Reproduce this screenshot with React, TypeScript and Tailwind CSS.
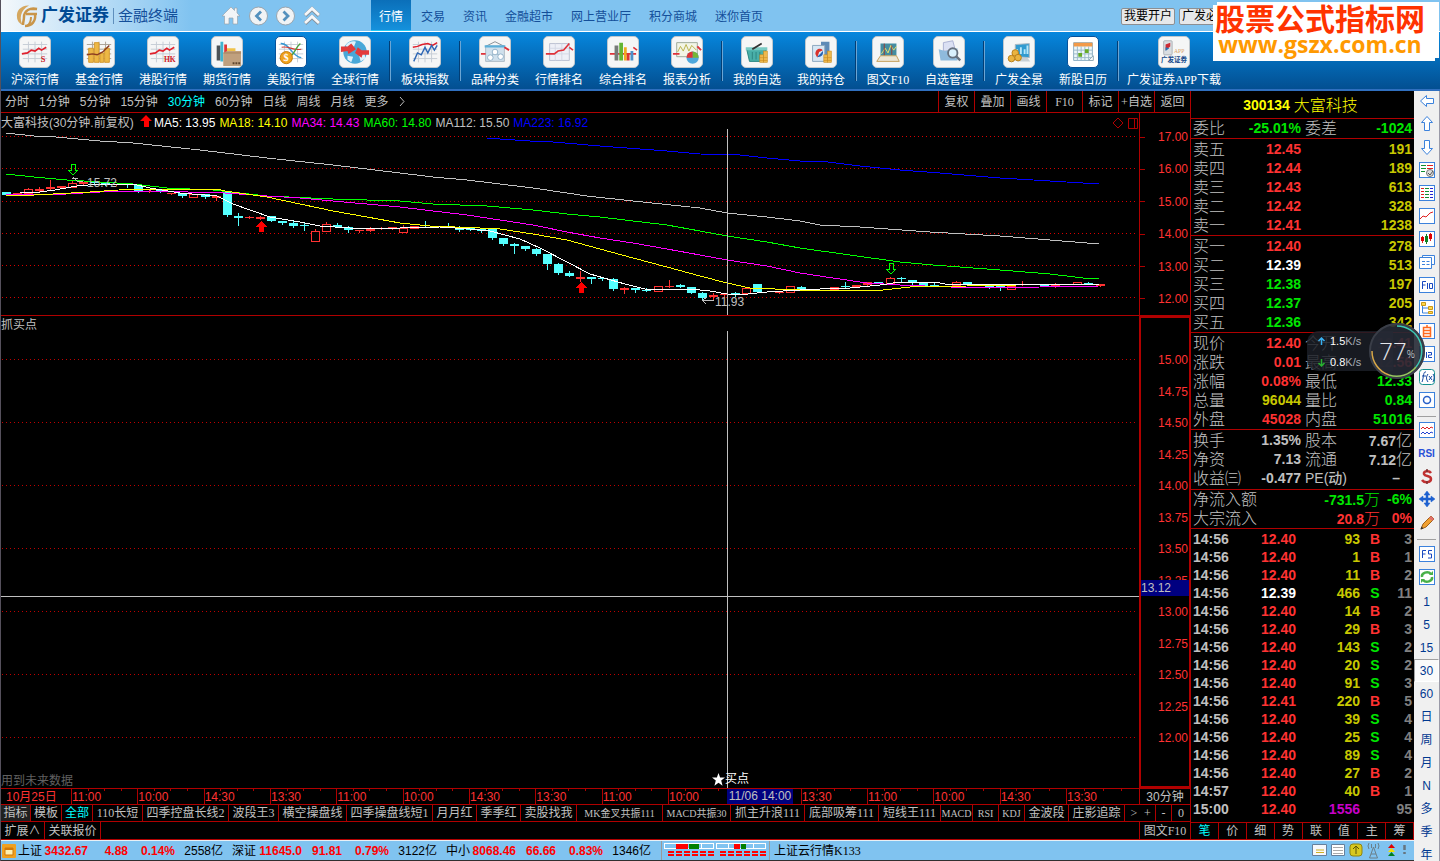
import { Fragment, type ReactNode } from "react";
import clsx from "clsx";

const NAV = ["交易", "资讯", "金融超市", "网上营业厅", "积分商城", "迷你首页"];

const Grid = ({ tone = "#c4ccd4" }: { tone?: string }) => (
  <path d="M3 8H29M3 13H29M3 18H29M3 23H29M9 5V27M16 5V27M23 5V27" stroke={tone} strokeWidth="1" fill="none" />
);

const TrendLine = () => (
  <path d="M2 18L8 17L12 14L16 15L20 12L23 14L28 11" stroke="#e0202c" strokeWidth="1.8" fill="none" />
);

const Coins = ({ x, y }: { x: number; y: number }) => (
  <g fill="#eeb84c" stroke="#c88a1c" strokeWidth=".6">
    <rect x={x} y={y + 4} width="4" height="8" />
    <rect x={x + 4} y={y} width="4" height="12" />
    <path d={`M${x} ${y + 7}h8M${x} ${y + 10}h8`} />
  </g>
);

type Tool = { label: string; icon: ReactNode; bright?: boolean; width?: string };

const TOOL_GROUPS: Tool[][] = [
  [
    {
      label: "沪深行情",
      icon: (
        <>
          <Grid />
          <TrendLine />
          <text x="22" y="27" fontSize="9" fontWeight="bold" fill="#d01824">S</text>
        </>
      ),
    },
    {
      label: "基金行情",
      icon: (
        <>
          <Grid tone="#a79f92" />
          <path d="M5 12h5v15H5zM11 6h5v21h-5zM17 17h4v10h-4zM22 12h5v15h-5z" fill="#edb845" stroke="#d4972b" />
          <path d="M3 19L9 18L14 19L20 16L27 9" stroke="#8b3a20" strokeWidth="1.5" fill="none" />
        </>
      ),
    },
    {
      label: "港股行情",
      icon: (
        <>
          <Grid />
          <TrendLine />
          <text x="17" y="27" fontSize="8" fontWeight="bold" fill="#d01824">HK</text>
        </>
      ),
    },
    {
      label: "期货行情",
      icon: (
        <>
          <path d="M5 9h4v16H5z" fill="#4d5357" />
          <path d="M9 5h3v21H9z" fill="#40b4cf" />
          <path d="M13 8h3v9h-3z" fill="#e03535" />
          <path d="M16 12h9v5h-9z" fill="#efc24a" />
          <path d="M12 17l4-2h15v16H12z" fill="#c0a07e" />
          <path d="M12 17h19" stroke="#a17f5c" />
          <path d="M22 28h8" stroke="#5d442d" strokeWidth="2" strokeDasharray="2 1" />
        </>
      ),
    },
    {
      label: "美股行情",
      bright: true,
      icon: (
        <>
          <Grid />
          <path d="M5 7C14 6 17 21 27 22" stroke="#3598d4" strokeWidth="1.5" fill="none" />
          <path d="M6 11C14 9 17 15 27 13" stroke="#d23b34" strokeWidth="1.2" fill="none" />
          <path d="M26 7C20 12 20 20 11 24" stroke="#4da33c" strokeWidth="1.5" fill="none" />
          <circle cx="11" cy="22" r="6.5" fill="#f0a21c" stroke="#c57a08" />
          <text x="8" y="26" fontSize="11" fontWeight="bold" fill="#fff">$</text>
        </>
      ),
    },
    {
      label: "全球行情",
      icon: (
        <>
          <circle cx="16" cy="16" r="12.5" fill="#49a8d8" />
          <path d="M6 9c3-4 7-5 11-4l-2 5-6 3zM20 18l6-2 1 7-5 3zM8 20l6 1-2 6-4-3z" fill="#dff2fb" />
          <path d="M1 10h7l4-3 5 6-8 5-1-3-7 1zM31 14h-8l-4-3-3 6 7 5 1-3h7z" fill="#e33b3b" />
        </>
      ),
    },
  ],
  [
    {
      label: "板块指数",
      icon: (
        <>
          <Grid />
          <path d="M3 11L8 10L13 8L19 7L24 9L29 6" stroke="#e0202c" strokeWidth="1.6" fill="none" />
          <path d="M4 26L8 17L12 19L16 11L19 17L23 9L26 14L29 9" stroke="#2d67b5" strokeWidth="1.5" fill="none" />
        </>
      ),
    },
  ],
  [
    {
      label: "品种分类",
      icon: (
        <>
          <path d="M16 5L6 10h20z" fill="none" stroke="#858d94" />
          <path d="M6 10h20v16H6z" fill="#cfe0ec" stroke="#adb9c3" />
          <path d="M5 10h22" stroke="#5bafd9" strokeWidth="2.5" />
          <path d="M1 18h5M26 11l5 3" stroke="#df3239" strokeWidth="2" />
          <path d="M11 22L16 16L22 21" stroke="#87a4ba" fill="none" />
          <g fill="#fff" stroke="#8fb0c8"><circle cx="11" cy="22" r="3" /><circle cx="16" cy="16" r="3" /><circle cx="22" cy="21" r="3" /></g>
        </>
      ),
    },
    {
      label: "行情排名",
      icon: (
        <>
          <path d="M6 7h21v18H6z" fill="#eef0f7" stroke="#b9bfd0" />
          <path d="M6 12h21M6 18h21M12 7v18M19 7v18" stroke="#d3d7e4" />
          <path d="M2 18h9l4-3 6-1 6-7M27 11l4 3" stroke="#df3239" strokeWidth="1.7" fill="none" />
        </>
      ),
    },
    {
      label: "综合排名",
      icon: (
        <>
          <path d="M2 18h28M27 11l4 3" stroke="#df3239" strokeWidth="1.7" />
          <path d="M7 9h4v16H7z" fill="#777b78" /><path d="M12 6h4v19h-4z" fill="#63b533" />
          <path d="M17 11h3v14h-3z" fill="#efab21" /><path d="M20 17h3v8h-3z" fill="#d93434" /><path d="M24 15h3v10h-3z" fill="#4b91ca" />
        </>
      ),
    },
    {
      label: "报表分析",
      icon: (
        <>
          <path d="M5 6h22v15H5z" fill="#f3f5e6" stroke="#9ca796" />
          <path d="M6 16l3-6 3 5 3-7 3 7 3-6 5 5" stroke="#b8b047" fill="none" />
          <path d="M1 18h7M27 10l4 4" stroke="#df3239" strokeWidth="2" />
          <circle cx="22" cy="22" r="6.5" fill="#4fa8dc" />
          <path d="M22 22v-6.500a6.500 6.500 0 0 1 6.500 6.500z" fill="#76b638" />
          <path d="M22 22L15.500 22A6.500 6.500 0 0 1 22 15.500z" fill="#df3535" />
        </>
      ),
    },
  ],
  [
    {
      label: "我的自选",
      icon: (
        <>
          <path d="M5 13h21l-3 13H8z" fill="#49afa8" stroke="#25847f" />
          <path d="M4 11h23v3H4z" fill="#79cac3" />
          <path d="M11 13L21 7" stroke="#333" strokeWidth="2" />
          <path d="M11 16v8M15 16v8M19 16v8" stroke="#2c8480" />
          <Coins x={19} y={15} />
        </>
      ),
    },
    {
      label: "我的持仓",
      icon: (
        <>
          <path d="M16 5h9v20h-9z" fill="#5e8bb7" />
          <path d="M7 9h13v17H7z" fill="#d7e7f4" stroke="#89a5bd" />
          <path d="M10 18c0-5 5-7 8-4l-4 2-2 6z" fill="#d9322d" />
          <path d="M18 15c1 5-3 7-6 6l3-3z" fill="#2663b4" />
          <Coins x={19} y={15} />
        </>
      ),
    },
  ],
  [
    {
      label: "图文F10",
      width: "w-[58px]",
      icon: (
        <>
          <path d="M8 7h17v13H8z" fill="#438da1" />
          <path d="M9 18l4-6 3 5 3-8 3 5 3-4" stroke="#e9e46d" fill="none" />
          <path d="M12 7v13M20 9v10" stroke="#963d34" />
          <path d="M8 20h17l3 6H4z" fill="#ece6d5" stroke="#c39d56" />
        </>
      ),
    },
    {
      label: "自选管理",
      icon: (
        <>
          <path d="M10 6l10-2 3 11H10z" fill="#dbe0f3" stroke="#a9afd1" />
          <path d="M5 13l7 2 13-3v13H7z" fill="#8fbadc" />
          <circle cx="20" cy="17" r="5" fill="#d9f0fd" stroke="#66717f" strokeWidth="2" />
          <path d="M24 21l4 4" stroke="#66717f" strokeWidth="2.5" />
        </>
      ),
    },
  ],
  [
    {
      label: "广发全景",
      icon: (
        <>
          <path d="M12 8l15-1v15l-15-1z" fill="#319bd0" stroke="#aeb9c1" />
          <path d="M14 18v-5M18 18v-7M22 18v-5M25 18V9" stroke="#b7e7f9" strokeWidth="2" />
          <path d="M17 22h8l3 4H14z" fill="#c8d0d5" />
          <g fill="#eab440" stroke="#b87e18"><circle cx="12" cy="17" r="3.500" /><circle cx="8" cy="23" r="3.500" /><circle cx="15" cy="22" r="3.500" /></g>
        </>
      ),
    },
    {
      label: "新股日历",
      bright: true,
      icon: (
        <>
          <path d="M6 6h20v19H6z" fill="#edf7fb" stroke="#87abc2" />
          <path d="M6 6h20v4H6z" fill="#f29a49" />
          <path d="M6 14h20M6 18h20M6 22h20M10 10v15M14 10v15M18 10v15M22 10v15" stroke="#9bb8c7" />
          <path d="M18 13h4v4h-4zM11 17h4v4h-4z" fill="#67ac27" />
          <path d="M22 25l5-5v5z" fill="#fff" stroke="#8da5b2" />
        </>
      ),
    },
  ],
  [
    {
      label: "广发证券APP下载",
      width: "w-[106px]",
      icon: (
        <>
          <rect x="5" y="4" width="9" height="15" rx="1" fill="#d9dde1" stroke="#abb1b6" />
          <path d="M7 8l5-2v4l-5 4z" fill="#cc2b34" />
          <path d="M7 11l4 1-4 3z" fill="#2770b3" />
          <text x="16" y="17" fontSize="6" fill="#d8a26a">APP</text>
          <text x="2" y="27" fontSize="7" fontWeight="bold" fill="#164a8b">广发证券</text>
        </>
      ),
    },
  ],
];

const PERIODS = ["分时", "1分钟", "5分钟", "15分钟", "30分钟", "60分钟", "日线", "周线", "月线", "更多"];
const CHART_ACTIONS = ["复权", "叠加", "画线", "F10", "标记", "+自选", "返回"];

const AVERAGES = [
  { text: "MA5: 13.95", color: "text-white" },
  { text: "MA18: 14.10", color: "text-[#ffff00]" },
  { text: "MA34: 14.43", color: "text-[#ff00ff]" },
  { text: "MA60: 14.80", color: "text-[#00ff00]" },
  { text: "MA112: 15.50", color: "text-[#c0c0c0]" },
  { text: "MA223: 16.92", color: "text-[#0000ff]" },
];

const MA_LINES = [
  { color: "#c0c0c0", points: "6,133 34,136 56,137 100,141 133,143 200,150 267,158 333,165 400,173 433,177 467,180 533,188 587,196 633,201 700,208 727,213 767,217 800,221 820,225 860,227 930,232 1000,236 1050,240 1099,244" },
  { color: "#0000ff", points: "487,138 500,139 530,141 553,142 600,146 640,149 667,151 700,154 740,155 767,158 800,161 820,161 860,166 900,170 940,173 1000,178 1050,181 1099,184" },
  { color: "#00ff00", points: "6,174 34,177 67,180 100,182 133,184 167,188 213,190 240,193 267,196 333,199 400,201 433,204 487,206 533,210 567,214 600,217 633,221 667,225 700,231 727,236 767,242 800,248 850,255 900,262 933,265 1000,270 1050,274 1083,278 1099,279" },
  { color: "#ff00ff", points: "6,195 67,194 100,192 150,191 225,193 267,196 300,198 333,201 400,207 433,211 467,215 500,220 533,225 567,232 600,238 633,243 667,249 700,255 727,260 767,266 800,273 833,278 867,283 900,285 950,287 1000,288 1040,287 1099,286" },
  { color: "#ffff00", points: "6,195 34,195 90,192 133,189 217,189 225,191 253,195 267,197 300,204 333,211 367,217 400,223 430,226 480,228 500,229 533,234 567,240 600,249 633,258 667,267 700,276 727,283 750,288 800,290 883,290 910,287 967,286 1017,285 1099,284" },
  { color: "#ffffff", points: "20,193 40,192 55,190 77,186 100,184 133,184 150,188 180,193 217,196 233,204 270,217 300,222 320,226 350,228 400,228 440,227 470,229 490,231 520,239 540,248 567,262 590,274 625,284 645,289 690,289 710,291 727,294 748,294 767,292 800,290 820,289 850,288 880,285 900,282 935,282 950,285 1099,284" },
];

// x, body top, body bottom, high, low, kind: d = down, u = up, f = flat up
type Candle = [number, number, number, number, number, "d" | "u" | "f"];
const CANDLES: Candle[] = [
  [6, 192, 195, 192, 195, "d"], [17, 193, 194, 193, 194, "f"], [28, 189, 193, 188, 193, "u"], [39, 189, 191, 187, 191, "f"],
  [50, 187, 189, 180, 189, "f"], [61, 186, 188, 186, 188, "f"], [72, 183, 187, 181, 187, "u"], [83, 182, 184, 182, 184, "f"],
  [94, 181, 183, 181, 183, "d"], [105, 183, 185, 183, 185, "d"], [116, 184, 185, 184, 185, "f"], [127, 184, 185, 184, 187, "d"],
  [138, 185, 192, 185, 192, "d"], [149, 191, 192, 191, 192, "f"], [160, 190, 191, 190, 192, "d"], [171, 193, 194, 193, 194, "f"],
  [182, 193, 196, 193, 197, "d"], [193, 194, 197, 194, 197, "u"], [205, 194, 197, 194, 198, "d"], [216, 196, 198, 196, 200, "f"],
  [227, 191, 215, 191, 216, "d"], [238, 216, 218, 213, 225, "d"], [249, 217, 218, 216, 218, "f"], [260, 217, 219, 216, 219, "f"],
  [271, 216, 221, 216, 221, "d"], [282, 221, 223, 221, 224, "d"], [293, 223, 226, 221, 227, "d"], [304, 225, 226, 223, 230, "d"],
  [315, 231, 241, 229, 241, "u"], [326, 224, 231, 222, 231, "u"], [337, 225, 227, 223, 227, "d"], [348, 227, 230, 226, 232, "d"],
  [359, 230, 231, 230, 232, "f"], [370, 229, 231, 227, 231, "f"], [381, 228, 229, 227, 229, "f"], [392, 227, 229, 227, 229, "f"],
  [403, 228, 232, 225, 232, "u"], [414, 226, 228, 226, 228, "u"], [425, 225, 226, 221, 226, "d"], [448, 226, 227, 223, 227, "d"],
  [459, 227, 230, 226, 231, "d"], [470, 228, 230, 228, 230, "d"], [481, 229, 231, 229, 232, "d"], [492, 229, 238, 229, 239, "d"],
  [503, 238, 244, 238, 245, "d"], [514, 244, 246, 243, 253, "d"], [525, 246, 249, 246, 250, "d"], [536, 249, 254, 248, 255, "d"],
  [547, 254, 264, 254, 269, "d"], [558, 264, 273, 263, 274, "d"], [569, 273, 276, 271, 276, "d"], [580, 277, 279, 271, 281, "f"],
  [591, 277, 279, 277, 283, "d"], [602, 278, 279, 277, 280, "d"], [613, 279, 289, 278, 290, "d"], [624, 288, 290, 287, 293, "f"],
  [635, 288, 290, 288, 292, "d"], [646, 290, 291, 288, 291, "d"], [658, 286, 291, 286, 291, "u"], [669, 286, 287, 280, 287, "f"],
  [680, 285, 287, 284, 287, "d"], [691, 287, 293, 287, 293, "d"], [702, 293, 298, 292, 300, "d"], [713, 295, 297, 293, 299, "f"],
  [724, 294, 295, 293, 296, "f"], [735, 293, 294, 292, 296, "d"], [746, 288, 293, 288, 293, "u"], [757, 284, 292, 284, 292, "d"],
  [779, 292, 293, 292, 293, "f"], [790, 286, 292, 286, 292, "u"], [801, 287, 289, 286, 290, "d"], [834, 287, 290, 287, 290, "f"],
  [845, 286, 287, 282, 287, "d"], [856, 285, 287, 285, 287, "f"], [867, 282, 285, 282, 285, "f"], [878, 282, 283, 282, 283, "d"],
  [890, 278, 283, 277, 283, "u"], [901, 278, 279, 277, 281, "d"], [912, 280, 283, 280, 284, "d"], [923, 283, 286, 283, 286, "d"],
  [934, 285, 286, 283, 286, "d"], [956, 282, 285, 281, 285, "u"], [967, 282, 284, 282, 284, "d"], [989, 286, 287, 285, 288, "d"],
  [1000, 286, 288, 286, 290, "d"], [1011, 286, 289, 286, 289, "u"], [1022, 284, 285, 281, 285, "f"], [1044, 285, 286, 284, 286, "d"],
  [1055, 285, 287, 283, 287, "f"], [1077, 282, 284, 282, 284, "u"], [1088, 283, 284, 282, 284, "d"], [1100, 284, 286, 284, 286, "f"],
];

const PRICE_LINES = [136, 168, 201, 233, 265, 297];
const INDICATOR_LINES = [359, 422, 485, 548, 611, 674, 737];
const TOP_SCALE = ["17.00", "16.00", "15.00", "14.00", "13.00", "12.00"];
const LOW_SCALE = ["15.00", "14.75", "14.50", "14.25", "14.00", "13.75", "13.50", "13.25", "13.00", "12.75", "12.50", "12.25", "12.00"];
const TIMES = ["11:00", "10:00", "14:30", "13:30", "11:00", "10:00", "14:30", "13:30", "11:00", "10:00", "", "13:30", "11:00", "10:00", "14:30", "13:30"];

const INDICATORS = [
  { name: "指标", width: "w-[30px]" }, { name: "模板", width: "w-[31px]" }, { name: "全部", width: "w-[31px]" },
  { name: "110长短", width: "w-[50px]" }, { name: "四季控盘长线2", width: "w-[86px]" }, { name: "波段王3", width: "w-[50px]" },
  { name: "横空操盘线", width: "w-[68px]" }, { name: "四季操盘线短1", width: "w-[86px]" }, { name: "月月红", width: "w-[44px]" },
  { name: "季季红", width: "w-[44px]" }, { name: "卖股找我", width: "w-[56px]" }, { name: "MK金叉共振111", width: "w-[86px]", small: true },
  { name: "MACD共振30", width: "w-[68px]", small: true }, { name: "抓主升浪111", width: "w-[74px]" }, { name: "底部吸筹111", width: "w-[74px]" },
  { name: "短线王111", width: "w-[62px]" }, { name: "MACD", width: "w-[32px]", small: true }, { name: "RSI", width: "w-[26px]", small: true },
  { name: "KDJ", width: "w-[26px]", small: true }, { name: "金波段", width: "w-[44px]" }, { name: "庄影追踪", width: "w-[56px]" },
];

const RED = "text-[#ff3232]";
const GREEN = "text-[#00e600]";
const YELLOW = "text-[#c8c800]";
const GRAY = "text-[#c0c0c0]";

const SELLS = [
  ["卖五", "12.45", "191", RED], ["卖四", "12.44", "189", RED], ["卖三", "12.43", "613", RED],
  ["卖二", "12.42", "328", RED], ["卖一", "12.41", "1238", RED],
];
const BUYS = [
  ["买一", "12.40", "278", RED], ["买二", "12.39", "513", "text-white"], ["买三", "12.38", "197", GREEN],
  ["买四", "12.37", "205", GREEN], ["买五", "12.36", "342", GREEN],
];
const PRICES = [
  ["现价", "12.40", RED, "今开", "12.41", RED], ["涨跌", "0.01", RED, "最高", "12.56", RED],
  ["涨幅", "0.08%", RED, "最低", "12.33", GREEN], ["总量", "96044", YELLOW, "量比", "0.84", GREEN],
  ["外盘", "45028", RED, "内盘", "51016", GREEN],
];
const BASICS = [
  ["换手", "1.35%", GRAY, "股本", "7.67亿", GRAY], ["净资", "7.13", GRAY, "流通", "7.12亿", GRAY],
  ["收益㈢", "-0.477", GRAY, "PE(动)", "–", GRAY],
];
const TICKS = [
  ["14:56", "12.40", "93", "B", "3"], ["14:56", "12.40", "1", "B", "1"], ["14:56", "12.40", "11", "B", "2"],
  ["14:56", "12.39", "466", "S", "11"], ["14:56", "12.40", "14", "B", "2"], ["14:56", "12.40", "29", "B", "3"],
  ["14:56", "12.40", "143", "S", "2"], ["14:56", "12.40", "20", "S", "2"], ["14:56", "12.40", "91", "S", "3"],
  ["14:56", "12.41", "220", "B", "5"], ["14:56", "12.40", "39", "S", "4"], ["14:56", "12.40", "25", "S", "4"],
  ["14:56", "12.40", "89", "S", "4"], ["14:56", "12.40", "27", "B", "2"], ["14:57", "12.40", "40", "B", "1"],
  ["15:00", "12.40", "1556", "", "95"],
];

const INDEXES = [
  ["上证", "3432.67", "4.88", "0.14%", "2558亿"],
  ["深证", "11645.0", "91.81", "0.79%", "3122亿"],
  ["中小", "8068.46", "66.66", "0.83%", "1346亿"],
];

function Frame({ color = "#3c82dc", children }: { color?: string; children?: ReactNode }) {
  return (
    <>
      <rect x="1.500" y="1.500" width="15" height="15" fill="#fff" stroke={color} />
      {children}
    </>
  );
}

const SIDE_ICONS: { name: string; icon: ReactNode }[] = [
  { name: "后退", icon: <path d="M2.500 9L8.500 3.500V6.500H15.500V11.500H8.500V14.500Z" fill="#fff" stroke="#3c82dc" /> },
  { name: "上移", icon: <path d="M9 1.500L14.500 7.500H11.500V15.500H6.500V7.500H3.500Z" fill="#fff" stroke="#3c82dc" /> },
  { name: "下移", icon: <path d="M9 16.500L14.500 10.500H11.500V2.500H6.500V10.500H3.500Z" fill="#fff" stroke="#3c82dc" /> },
  {
    name: "报价",
    icon: (
      <Frame>
        <path d="M3 4.500h5M3 7.500h5M3 10.500h4" stroke="#109030" /><path d="M9 4.500h6M9 7.500h6" stroke="#e02020" />
        <circle cx="12" cy="12" r="3.500" fill="#ddd" stroke="#777" /><path d="M10 12l2 2 3-4" stroke="#555" fill="none" />
      </Frame>
    ),
  },
  {
    name: "列表",
    icon: (
      <Frame>
        <path d="M3 4.500h3M3 7.500h3M3 10.500h3M3 13.500h3" stroke="#e02020" />
        <path d="M7 4.500h4M7 7.500h4M7 10.500h4M7 13.500h4" stroke="#109030" />
        <path d="M12 4.500h3M12 7.500h3M12 10.500h3M12 13.500h3" stroke="#2020d0" />
      </Frame>
    ),
  },
  { name: "走势", icon: <Frame><path d="M2 12L5 9L8 10L12 6L15 5" stroke="#e02020" fill="none" /></Frame> },
  {
    name: "K线",
    icon: (
      <Frame>
        <path d="M4.500 6v7M12.500 3v8" stroke="#e02020" /><path d="M3 7h3v4H3zM11 4h3v5h-3z" fill="#e00000" />
        <path d="M8.500 4v10" stroke="#108020" /><path d="M7 6h3v6H7z" fill="#108020" />
      </Frame>
    ),
  },
  { name: "窗口", icon: <path d="M4.500 4.500V2.500H16.500V11.500H14M1.500 4.500H13.500V15.500H1.500ZM4 8.500h3M8.500 8.500h3M4 11.500h3M8.500 11.500h3" stroke="#3c82dc" fill="#fff" /> },
  { name: "F10", icon: <Frame><path d="M4.500 13V5.500H8M4.500 9h3M9.500 7v6M11.500 7.500h3v5h-3z" stroke="#1848c0" fill="none" /></Frame> },
  { name: "结构", icon: <Frame><path d="M4.500 6v8H11M4.500 9H11" stroke="#3c82dc" fill="none" /><path d="M3.500 3.500h4v3h-4zM10.500 7.500h4v3h-4zM10.500 12.500h4v2h-4z" fill="#ffd84a" stroke="#c89818" /></Frame> },
  { name: "自选", icon: <Frame><path d="M9 3v2M5.500 5.500h7v9h-7zM5.500 8.500h7M5.500 11.500h7" stroke="#ff6a20" strokeWidth="1.500" fill="none" /></Frame> },
  { name: "F12", icon: <Frame><path d="M4.500 13V6H7M8.500 7v6M10 7.500h3.500V10H10.500v2.500H14" stroke="#1848c0" fill="none" /></Frame> },
  {
    name: "公式",
    icon: <><rect x="1.500" y="1.500" width="15" height="15" rx="3" fill="#fff" stroke="#149090" /><path d="M8 4C5 3 6 9 4 14M4 8h4M10 6c-2 3-2 5 0 8M11 8l3 4M14 8l-3 4M15 6c2 3 1 5 0 8" stroke="#1848a0" fill="none" /></>,
  },
  { name: "圆", icon: <Frame><circle cx="9" cy="9" r="3.500" fill="none" stroke="#2860c8" strokeWidth="1.500" /></Frame> },
];

const SIDE_TOOLS: { name: string; icon: ReactNode }[] = [
  { name: "波浪", icon: <Frame><path d="M3 8l2-2 2 2 2-2 2 2 2-2 2 1" stroke="#e02020" fill="none" /><path d="M3 13l2-2 2 2 2-2 2 2 2-2 2 1" stroke="#2040d0" fill="none" /></Frame> },
  { name: "RSI", icon: null },
  { name: "资金", icon: <><path d="M13 6C11 3 5 4 6 7s7 1 7 5-7 4-9 1" stroke="#c03030" strokeWidth="2.500" fill="none" /><path d="M9 2v3M9 14v3" stroke="#783030" strokeWidth="1.500" /></> },
  { name: "移动", icon: <path d="M9 1l3 4h-2v3h3V6l4 3-4 3v-2h-3v3h2l-3 4-3-4h2v-3H5v2L1 9l4-3v2h3V5H6z" fill="#1c60d0" stroke="#1c60d0" strokeWidth=".5" /> },
  { name: "画笔", icon: <><path d="M3 16l2-5 8-8 3 3-8 8z" fill="#f0a030" stroke="#a06018" /><path d="M11 5l3 3 2-2-3-3z" fill="#e07070" /><path d="M2.500 16.500l1-3 2 2z" fill="#333" /></> },
];

const SIDE_LAST: { name: string; icon: ReactNode }[] = [
  { name: "F5", icon: <Frame><path d="M4.500 13V5.500H8M4.500 9h3M14 5.500h-3.500v3.500h3v4H10" stroke="#1848c0" fill="none" /></Frame> },
  { name: "刷新", icon: <Frame><path d="M4 9a5 4 0 0 1 9-3M14 9a5 4 0 0 1-9 3" stroke="#48b048" strokeWidth="2.500" fill="none" /><path d="M11 7h4V3zM7 11H3v4z" fill="#48b048" /></Frame> },
];

const SIDE_PERIODS = ["1", "5", "15", "30", "60", "日", "周", "月", "N", "多", "季", "年"];

function SideButton({ name, icon }: { name: string; icon: ReactNode }) {
  return (
    <button type="button" aria-label={name} className="flex h-[23px] shrink-0 items-start justify-center pt-px">
      {icon ? (
        <svg width="18" height="18" viewBox="0 0 18 18">{icon}</svg>
      ) : (
        <span className="text-[10px] leading-5 font-bold text-[#2850d8]">{name}</span>
      )}
    </button>
  );
}

function Header() {
  return (
    <header className="flex h-8 shrink-0 border-b border-white bg-linear-to-r from-[#f4f8fb] via-[#80c3f0] via-[190px] to-[#80c3f0] text-[#144f9a]">
      <div className="flex w-[200px] shrink-0 items-center pl-3.5">
        <svg width="24" height="24" viewBox="0 0 24 24" className="mr-0.5" fill="none" stroke="#c99549">
          <path d="M14 1.500C6 1 1 7 2 13c0 4 3 7 6 8C4 16 5 6 14 1.500Z" fill="#d5a75f" stroke="none" />
          <path d="M22 5C15 3 9 7 9 13c0 3-1 5-1 8M22 5h-7" strokeWidth="2.500" />
          <path d="M11 10h11M20 10c1 7-3 12-10 12" strokeWidth="2.500" />
          <path d="M16 13c0 4-1 7-4 9" strokeWidth="2" />
        </svg>
        <strong className="text-[17px] leading-8 text-[#004a94]">广发证券</strong>
        <span className="mx-1 h-4 w-px bg-[#5f8fbd]" />
        <span className="text-[15px] leading-8">金融终端</span>
      </div>
      <div className="flex w-[170px] shrink-0 items-center gap-2 pl-[20px]">
        <button type="button" aria-label="首页">
          <svg width="20" height="20" viewBox="0 0 20 20"><path d="M10 1L1 10H3.500V18H8V12H12V18H16.500V10H19L16 7V2H13.500V4.500Z" fill="#f3f5f7" stroke="#9aa5ae" strokeWidth=".7" /></svg>
        </button>
        <button type="button" aria-label="后退">
          <svg width="19" height="20" viewBox="0 0 19 20"><circle cx="9.500" cy="10" r="9" fill="#f1f3f5" stroke="#9aa5ae" /><path d="M12 5.500L7.500 10L12 14.500" stroke="#5390bd" strokeWidth="2.800" fill="none" /></svg>
        </button>
        <button type="button" aria-label="前进">
          <svg width="19" height="20" viewBox="0 0 19 20"><circle cx="9.500" cy="10" r="9" fill="#f1f3f5" stroke="#9aa5ae" /><path d="M7.500 5.500L12 10L7.500 14.500" stroke="#5390bd" strokeWidth="2.800" fill="none" /></svg>
        </button>
        <button type="button" aria-label="收起">
          <svg width="18" height="20" viewBox="0 0 18 20"><path d="M2 9.500L9 3L16 9.500M2 17.500L9 11L16 17.500" stroke="#87939e" strokeWidth="4" fill="none" /><path d="M2 9L9 2.500L16 9M2 17L9 10.500L16 17" stroke="#f5f7f9" strokeWidth="2.800" fill="none" /></svg>
        </button>
      </div>
      <nav className="flex items-stretch gap-[18px] leading-[34px] whitespace-nowrap">
        <a href="#" className="-mr-2 border-b border-[#20c8f8] bg-linear-to-b from-[#0b6fb9] to-[#1591dc] px-2 text-white">行情</a>
        {NAV.map((item) => <a key={item} href="#">{item}</a>)}
      </nav>
      <div className="ml-auto flex w-[319px] shrink-0 items-center gap-1 pt-0.5 text-black">
        <button type="button" className="h-[17px] rounded-xs border border-[#8c8f93] bg-[#e6e8ea] px-0.5 leading-[15px]">我要开户</button>
        <button type="button" className="h-[17px] rounded-xs border border-[#8c8f93] bg-[#e6e8ea] px-0.5 leading-[15px]">广发必读</button>
      </div>
    </header>
  );
}

function Toolbar() {
  return (
    <div className="flex h-[59px] shrink-0 border-b-2 border-[#2f6fbf] bg-linear-to-b from-[#0687de] to-[#034f91] pl-0.5 font-['Liberation_Serif','Noto_Sans_CJK_SC',serif]">
      {TOOL_GROUPS.map((group, i) => (
        <Fragment key={group[0].label}>
          {i > 0 && <div className="mx-[2px] mt-[9px] h-10 w-0.5 shrink-0 border-r border-[#6ba5d4] bg-[#023e75]" />}
          {group.map((tool) => (
            <button key={tool.label} type="button" className={clsx("flex shrink-0 flex-col items-center pt-1 text-white", tool.width ?? "w-16")}>
              <svg
                width="32"
                height="32"
                viewBox="0 0 32 32"
                className={clsx("rounded-[5px] border", tool.bright ? "border-[#07529a] bg-white" : "border-[#bfc7cd] bg-[#f5f6f6]")}
              >
                {tool.icon}
              </svg>
              <span className="mt-1 leading-4 whitespace-nowrap">{tool.label}</span>
            </button>
          ))}
        </Fragment>
      ))}
    </div>
  );
}

function DownMark({ x, y }: { x: number; y: number }) {
  return <path d={`M${x - 2} ${y}h4v6h3l-5 5l-5 -5h3z`} fill="none" stroke="#00ff00" />;
}

function UpMark({ x, y }: { x: number; y: number }) {
  return <path d={`M${x} ${y}l6 6h-3v5h-5v-5h-3z`} fill="#ff0000" />;
}

function PriceChart() {
  return (
    <section className="flex h-[203px] shrink-0 border-b border-[#b00000]">
      <div className="relative min-w-0 flex-1">
        <svg viewBox="1 113 1138 202" preserveAspectRatio="none" className="h-full w-full" shapeRendering="crispEdges">
          {PRICE_LINES.map((y) => (
            <path key={y} d={`M2 ${y + 0.5}H1138`} stroke="#d80000" strokeDasharray="1 3" />
          ))}
          {CANDLES.map(([x, top, bottom, high, low, kind]) => {
            const color = kind === "d" ? "#54ffff" : "#ff3232";
            return (
              <g key={x} stroke={color}>
                <path d={`M${x + 0.5} ${high}V${low + 1}`} />
                {kind === "u" ? (
                  <rect x={x - 3.5} y={top + 0.5} width="8" height={bottom - top} fill="#000" />
                ) : (
                  <rect x={x - 4} y={top} width="9" height={Math.max(bottom - top, 1)} fill={color} stroke="none" />
                )}
              </g>
            );
          })}
          {MA_LINES.map((line) => (
            <polyline key={line.color} points={line.points} fill="none" stroke={line.color} />
          ))}
          <DownMark x={73} y={164} />
          <DownMark x={891} y={263} />
          <UpMark x={261} y={221} />
          <UpMark x={581} y={282} />
          <path d="M72 178h6M73 177l4 4h6M702 300.500h12M703 300l4 -3M703 301l3 3" stroke="#c0c0c0" fill="none" />
          <path d="M727.500 129V315" stroke="#c0c0c0" />
        </svg>
        <div className="absolute inset-x-0 top-0 flex h-5 items-center whitespace-nowrap">
          <span className="w-[139px] text-[#c0c0c0]">大富科技(30分钟.前复权)</span>
          <svg width="14" height="16" viewBox="0 0 14 16"><path d="M6 0l6 6H9v6H4V6H0z" fill="#ff0000" /></svg>
          <div className="flex gap-1">
            {AVERAGES.map((avg) => <span key={avg.text} className={avg.color}>{avg.text}</span>)}
          </div>
          <svg width="28" height="14" viewBox="0 0 28 14" className="ml-auto" fill="none" stroke="#b00000">
            <path d="M7 2L12 7L7 12L2 7ZM17.500 2.500H26.500V12.500H17.500ZM23.500 2V13" />
          </svg>
        </div>
        <span className="absolute top-[62px] left-[86px] leading-4 text-[#c0c0c0]">15.72</span>
        <span className="absolute top-[181px] left-[714px] leading-4 text-[#c0c0c0]">11.93</span>
      </div>
      <div className="flex w-[51px] flex-col justify-between border-l border-[#b00000] pt-4 pr-0.5 pb-2 text-right text-[#ff3232]">
        {TOP_SCALE.map((value) => (
          <div key={value} className="flex h-4 items-center justify-between leading-4">
            <span className="h-px w-[5px] bg-[#b00000]" />
            {value}
          </div>
        ))}
      </div>
    </section>
  );
}

function IndicatorChart() {
  return (
    <section className="flex min-h-0 flex-1">
      <div className="relative min-w-0 flex-1">
        <svg viewBox="1 316 1138 472" preserveAspectRatio="none" className="absolute inset-0 h-full w-full" shapeRendering="crispEdges">
          {INDICATOR_LINES.map((y) => (
            <path key={y} d={`M2 ${y + 0.5}H1138`} stroke="#c00000" strokeDasharray="1 3" />
          ))}
          <path d="M727.500 331V788M1 596.500H1139" stroke="#c0c0c0" />
        </svg>
        <span className="absolute top-0 left-0 leading-[18px] text-[#c0c0c0]">抓买点</span>
        <span className="absolute bottom-0 left-0 leading-[14px] text-[#606060]">用到未来数据</span>
        <span className="absolute bottom-0.5 left-[711px] flex items-center leading-[14px] text-white">
          <svg width="13" height="13" viewBox="0 0 24 24"><path d="M12 0l3 8.500h9l-7 5.500 2.500 9.500L12 18l-7.500 5.500L7 14 0 8.500h9z" fill="#fff" /></svg>
          买点
        </span>
      </div>
      <div className="relative -mr-px flex w-[52px] flex-col justify-between border-2 border-[#b00000] pt-[34px] pr-px pb-10 text-right leading-4 text-[#ff3232]">
        {LOW_SCALE.map((value) => <span key={value}>{value}</span>)}
        <span className="absolute inset-x-0 top-[262px] bg-[#000080] text-left text-[#c0c0c0]">13.12</span>
      </div>
    </section>
  );
}

function TimeAxis() {
  return (
    <div className="flex h-[17px] shrink-0 border-y border-[#b00000] leading-4">
      <div className="relative grid min-w-0 flex-1 grid-cols-[70px_repeat(15,minmax(0,1fr))_73px] text-[#ff3232]">
        <span className="pl-[5px] whitespace-nowrap">10月25日</span>
        {TIMES.map((time, i) => (
          <div key={i} className="relative border-l border-[#b00000]">
            {time}
            <div className="absolute inset-x-0 top-0 flex h-0.5 justify-evenly">
              <span className="w-px bg-[#b00000]" />
              <span className="w-px bg-[#b00000]" />
              <span className="w-px bg-[#b00000]" />
            </div>
          </div>
        ))}
        <span className="absolute left-[726px] w-[66px] bg-[#000080] text-center leading-[15px] whitespace-nowrap text-[#c0c0c0]">11/06 14:00</span>
      </div>
      <span className="w-[51px] border-l border-[#b00000] text-center text-[#c0c0c0]">30分钟</span>
    </div>
  );
}

function IndicatorTabs() {
  return (
    <>
      <div className="flex h-[17px] shrink-0 border-b border-[#b00000] font-['Liberation_Serif','Noto_Sans_CJK_SC',serif] leading-[17px] text-[#c0c0c0]">
        {INDICATORS.map((tab, i) => (
          <button
            key={tab.name}
            type="button"
            className={clsx(
              "flex shrink-0 justify-center border-r border-[#b00000] whitespace-nowrap",
              tab.width,
              tab.small && "text-[10px]",
              i === 0 && "bg-[#202020]",
              i === 2 && "text-[#00ffff]",
            )}
          >
            {tab.name}
          </button>
        ))}
        <button type="button" className="ml-auto w-3">&gt;</button>
        <button type="button" className="w-4 border-r border-[#b00000]">+</button>
        <button type="button" className="w-4 border-r border-[#b00000]">-</button>
        <button type="button" className="w-[18px]">0</button>
      </div>
      <div className="flex h-[18px] shrink-0 border-b border-[#b00000] font-['Liberation_Serif','Noto_Sans_CJK_SC',serif] leading-[18px] text-[#c0c0c0]">
        <button type="button" className="w-11 border-r border-[#b00000] whitespace-nowrap">扩展∧</button>
        <button type="button" className="w-14 border-r border-[#b00000] whitespace-nowrap">关联报价</button>
        <button type="button" className="ml-auto w-[51px] border-l border-[#b00000] whitespace-nowrap">图文F10</button>
      </div>
    </>
  );
}

// The unit after a figure is set larger and lighter than its digits.
function Figure({ value }: { value: string }) {
  const unit = value.match(/[亿万]$/)?.[0];
  if (!unit) return <>{value}</>;
  return (
    <>
      {value.slice(0, -1)}
      <span className="text-base leading-[19px] font-light">{unit}</span>
    </>
  );
}

function PairRow({ row }: { row: string[] }) {
  return (
    <div className="flex h-[19px] items-center">
      <span className="w-12 text-base leading-[19px] font-light whitespace-nowrap text-[#c0c0c0]">{row[0]}</span>
      <span className={clsx("w-[60px] text-right", row[2])}>{row[1]}</span>
      <span className={clsx("w-12 pl-1 leading-[19px] whitespace-nowrap text-[#c0c0c0]", row[3].startsWith("PE") ? "text-sm font-medium" : "text-base font-light")}>{row[3]}</span>
      <span className={clsx("flex-1 text-right whitespace-nowrap", row[5], row[4] === "–" && "pr-3")}>
        <Figure value={row[4]} />
      </span>
    </div>
  );
}

function DepthRow({ row }: { row: string[] }) {
  return (
    <div className="flex h-[19px] items-center">
      <span className="w-12 text-base leading-[19px] font-light text-[#c0c0c0]">{row[0]}</span>
      <span className={clsx("w-[60px] text-right", row[3])}>{row[1]}</span>
      <span className="flex-1 text-right text-[#c8c800]">{row[2]}</span>
    </div>
  );
}

function FlowRow({ label, amount, rate, color }: { label: string; amount: string; rate: string; color: string }) {
  return (
    <div className={clsx("flex h-[19px] items-center", color)}>
      <span className="w-[100px] text-base leading-[19px] font-light text-[#c0c0c0]">{label}</span>
      <span className="flex-1 text-right"><Figure value={amount} /></span>
      <span className="w-8 text-right">{rate}</span>
    </div>
  );
}

function QuotePanel() {
  return (
    <aside className="flex w-[224px] shrink-0 flex-col border-l border-[#b00000] text-sm leading-[19px] font-bold">
      <h1 className="flex h-7 shrink-0 items-center justify-center gap-1 border-b border-[#b00000] pt-0.5 pr-1 text-[#ffff00]">
        300134 <span className="text-base font-light">大富科技</span>
      </h1>
      <div className="border-b border-[#b00000] px-0.5">
        <PairRow row={["委比", "-25.01%", GREEN, "委差", "-1024", GREEN]} />
      </div>
      <div className="border-b border-[#b00000] px-0.5 pt-px">
        {SELLS.map((row) => <DepthRow key={row[0]} row={row} />)}
      </div>
      <div className="border-b border-[#b00000] px-0.5 pt-px">
        {BUYS.map((row) => <DepthRow key={row[0]} row={row} />)}
      </div>
      <div className="border-b border-[#b00000] px-0.5 pt-px">
        {PRICES.map((row) => <PairRow key={row[0]} row={row} />)}
      </div>
      <div className="border-b border-[#b00000] px-0.5 py-px">
        {BASICS.map((row) => <PairRow key={row[0]} row={row} />)}
      </div>
      <div className="border-b border-[#b00000] px-0.5">
        <FlowRow label="净流入额" amount="-731.5万" rate="-6%" color={GREEN} />
        <FlowRow label="大宗流入" amount="20.8万" rate="0%" color={RED} />
      </div>
      <table className="mt-px w-full table-fixed leading-[18px]">
        <tbody>
          {TICKS.map(([time, price, volume, side, count], i) => (
            <tr key={i} className="h-[18px]">
              <td className="w-[38px] pl-0.5 text-[#c0c0c0]">{time}</td>
              <td className={clsx("w-[67px] text-right", price === "12.39" ? "text-white" : RED)}>{price}</td>
              <td className={clsx("w-[64px] text-right", volume === "1556" ? "text-[#c800c8]" : YELLOW)}>{volume}</td>
              <td className={clsx("w-[30px] text-center", side === "B" ? RED : GREEN)}>{side}</td>
              <td className="pr-0.5 text-right text-[#808080]">{count}</td>
            </tr>
          ))}
        </tbody>
      </table>
      <div className="mt-auto flex h-[18px] shrink-0 border-y border-[#b00000] text-xs leading-[17px] font-normal text-[#c0c0c0]">
        {["笔", "价", "细", "势", "联", "值", "主", "筹"].map((tab, i) => (
          <button key={tab} type="button" className={clsx("flex-1 border-r border-[#b00000]", i === 0 && "text-[#00ffff]")}>{tab}</button>
        ))}
      </div>
    </aside>
  );
}

function StatusBar() {
  return (
    <footer className="flex h-[21px] shrink-0 items-center border-t border-b border-t-[#e8f0f6] border-b-[#303030] bg-[#80c3f0] whitespace-nowrap text-black">
      <svg width="14" height="14" viewBox="0 0 14 14" className="mr-[2px] ml-px"><rect width="14" height="14" rx="1" fill="#f0a020" /><path d="M3 4h8v7H3z" fill="#fff0b0" stroke="#d07808" /><path d="M3 5h8" stroke="#d07808" strokeWidth="2" /></svg>
      {INDEXES.map(([name, value, change, rate, amount]) => (
        <div key={name} className="mr-[9px] flex">
          <span className="w-6">{name}</span>
          <strong className="w-[46px] text-right text-[#ff0000]">{value}</strong>
          <strong className="w-10 text-right text-[#ff0000]">{change}</strong>
          <strong className="w-[47px] text-right text-[#ff0000]">{rate}</strong>
          <span className="w-12 text-right">{amount}</span>
        </div>
      ))}
      <svg width="110" height="19" viewBox="661 841 110 19" shapeRendering="crispEdges">
        <path d="M662.500 841V860M770.500 841V860" stroke="#9a9a9a" />
        <path d="M665.500 843.500h49v5h-49zM717.500 843.500h49v5h-49zM678 843v6M702 843v6M729 843v6M754 843v6" fill="none" stroke="#fff" />
        <path d="M677 844h12v5h-12zM735 844h6v5h-6z" fill="#ff0000" />
        <path d="M690 844h10v5h-10zM742 844h5v5h-5z" fill="#008000" />
        <path d="M669 852h46M669 855h46M721 852h46M721 855h46" stroke="#ff0000" strokeWidth="2" strokeDasharray="6 2" />
      </svg>
      <span className="ml-1 font-['Liberation_Serif','Noto_Sans_CJK_SC',serif]">上证云行情K133</span>
      <svg width="104" height="18" viewBox="1310 842 104 18" className="ml-auto">
        <path d="M1312.500 844.500h14v11h-14z" fill="#f6f8fb" stroke="#66809c" /><path d="M1316 850h8M1316 852.500h8" stroke="#d0b020" />
        <path d="M1331.500 844.500h13v11h-13z" fill="#fff" stroke="#66809c" /><path d="M1333 847.500h10M1333 850.500h10M1333 853.500h10" stroke="#aaa" />
        <rect x="1350" y="844" width="12" height="12" rx="3" fill="#d8c820" stroke="#8f8510" /><path d="M1356 854v-7M1353 849l3-3 3 3" stroke="#5b5408" fill="none" />
        <path d="M1373.500 847l-4 11h8zM1371 854h5M1369 843q-2 3 0 6M1378 843q2 3 0 6M1371.500 844v4M1375.500 844v4" stroke="#6b7f88" fill="none" />
        <path d="M1391.500 844l3.500 4h-7z" fill="#e00000" /><path d="M1391.500 848l3.500 4h-7z" fill="#f0e000" /><path d="M1391.500 852l3.500 4h-7z" fill="#008020" />
        <path d="M1404.500 845v5M1404.500 852v2" stroke="#66757f" strokeWidth="2.500" />
      </svg>
    </footer>
  );
}

function SideBar() {
  return (
    <aside className="flex w-[26px] shrink-0 flex-col overflow-hidden border-r border-[#9a9aa8] bg-[#f0f0f0] text-[#003890]">
      {SIDE_ICONS.map((item) => <SideButton key={item.name} {...item} />)}
      <hr className="mx-[3px] my-[3px] border-[#a0a0a0]" />
      {SIDE_TOOLS.map((item) => <SideButton key={item.name} {...item} />)}
      <hr className="mx-[3px] my-1 border-[#a0a0a0]" />
      {SIDE_LAST.map((item) => <SideButton key={item.name} {...item} />)}
      {SIDE_PERIODS.map((period) => (
        <button
          key={period}
          type="button"
          className={clsx("h-[23px] shrink-0 text-xs leading-5", period === "30" && "border border-[#a0a0a0] border-r-white border-b-white bg-[#fafafa]")}
        >
          {period}
        </button>
      ))}
    </aside>
  );
}

function SpeedWidget() {
  return (
    <div className="absolute top-[323px] right-[15px] flex h-14 w-[118px] items-center text-[#a8adb5]">
      <div className="h-10 w-[86px] rounded-l-xl bg-[#1b1e27]/85 pl-[10px] text-[11px] leading-[21px]">
        <div className="flex items-center gap-1">
          <svg width="9" height="9" viewBox="0 0 9 9" fill="none" stroke="#38b0f0" strokeWidth="1.500"><path d="M4.500 8V1M1.500 4L4.500 1L7.500 4" /></svg>
          <span><span className="text-white">1.5</span>K/s</span>
        </div>
        <div className="flex items-center gap-1">
          <svg width="9" height="9" viewBox="0 0 9 9" fill="none" stroke="#28b030" strokeWidth="1.500"><path d="M4.500 1V8M1.500 5L4.500 8L7.500 5" /></svg>
          <span><span className="text-white">0.8</span>K/s</span>
        </div>
      </div>
      <div className="absolute right-0 size-14 rounded-full bg-[#262a35]/90">
        <svg viewBox="0 0 56 56" className="absolute inset-0" fill="none">
          <circle cx="28" cy="28" r="27" stroke="#3a3e48" strokeWidth="2" />
          <path d="M28 3A25 25 0 0 1 47 44" stroke="#3cc8b4" strokeWidth="1.500" />
          <path d="M47 44A25 25 0 0 1 20 52" stroke="#98c860" strokeWidth="1.500" />
          <path d="M20 52A25 25 0 0 1 3 28" stroke="#d8a848" strokeWidth="1.500" />
        </svg>
        <div className="flex h-full items-center justify-center font-['Open_Sans',sans-serif] text-[24px] font-light text-[#e4e6ea]">
          77<span className="mt-2 text-[10px]">%</span>
        </div>
      </div>
    </div>
  );
}

export default function App() {
  return (
    <div className="relative flex h-screen flex-col overflow-hidden border-l border-[#55505c] bg-black font-['Liberation_Sans','Noto_Sans_CJK_SC',sans-serif] text-xs">
      <Header />
      <Toolbar />
      <div className="flex min-h-0 flex-1">
        <div className="flex min-w-0 flex-1 flex-col">
          <div className="flex min-h-0 flex-1">
            <main className="flex min-w-0 flex-1 flex-col">
              <div className="flex h-[22px] shrink-0 justify-between border-b border-[#b00000] leading-[22px] whitespace-nowrap text-[#c0c0c0]">
                <div className="flex gap-2.5 pl-1">
                  {PERIODS.map((period) => (
                    <button key={period} type="button" className={clsx(period === "30分钟" && "text-[#00ffff]")}>{period}</button>
                  ))}
                  <svg width="6" height="21" viewBox="0 0 6 21" fill="none" stroke="#c0c0c0"><path d="M1 6l4 4.500l-4 4.500" /></svg>
                </div>
                <div className="flex">
                  {CHART_ACTIONS.map((action) => (
                    <button key={action} type="button" className="w-9 border-l border-[#b00000] font-['Liberation_Serif','Noto_Sans_CJK_SC',serif]">{action}</button>
                  ))}
                </div>
              </div>
              <PriceChart />
              <IndicatorChart />
              <TimeAxis />
              <IndicatorTabs />
            </main>
            <QuotePanel />
          </div>
          <StatusBar />
        </div>
        <SideBar />
      </div>
      <SpeedWidget />
      <a href="#" className="absolute top-[5px] right-[5px] flex h-14 w-[222px] flex-col items-center bg-white pr-2 font-bold shadow-[4px_-3px_0_#fff]">
        <span className="text-[30px] leading-[30px] whitespace-nowrap text-[#ff3300]">股票公式指标网</span>
        <span className="font-['Open_Sans','Noto_Sans',sans-serif] text-[23px] leading-[18px] text-[#ff9900]">www.gszx.com.cn</span>
      </a>
    </div>
  );
}
